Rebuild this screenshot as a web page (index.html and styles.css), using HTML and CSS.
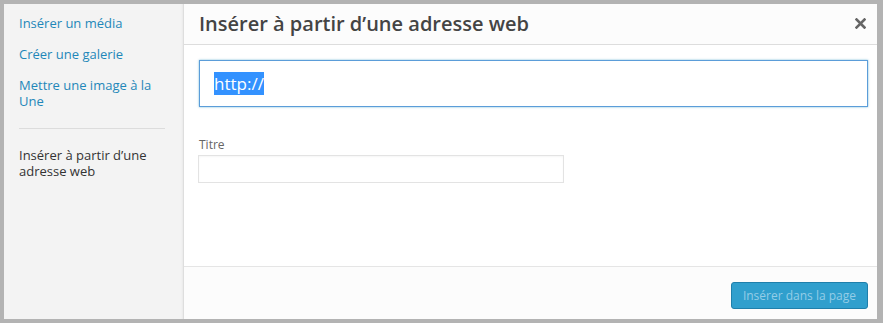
FILE: index.html
```html
<!DOCTYPE html>
<html lang="fr">
<head>
<meta charset="UTF-8">
<meta name="viewport" content="width=device-width, initial-scale=1.0">
<title>Insérer à partir d’une adresse web</title>
<link rel="stylesheet" href="styles.css">
</head>
<body>
<div class="modal">
  <div class="menu">
    <a class="menu-item" href="#">Insérer un média</a>
    <a class="menu-item" href="#">Créer une galerie</a>
    <a class="menu-item" href="#">Mettre une image à la Une</a>
    <div class="separator"></div>
    <div class="menu-item active">Insérer à partir d’une adresse web</div>
  </div>
  <div class="frame">
    <div class="frame-title">
      <h1>Insérer à partir d’une adresse web</h1>
      <span class="close">
        <svg width="11" height="11" viewBox="0 0 11 11">
          <path d="M1.5 1.5 L9.5 9.5 M9.5 1.5 L1.5 9.5" stroke="#666" stroke-width="2.6" stroke-linecap="square"/>
        </svg>
      </span>
    </div>
    <div class="frame-content">
      <div class="url-input"><span class="selected">http://</span></div>
      <label class="field-label">Titre</label>
      <div class="text-input"></div>
    </div>
    <div class="frame-toolbar">
      <button class="button-primary" disabled>Insérer dans la page</button>
    </div>
  </div>
</div>
</body>
</html>
```

FILE: styles.css
```css
body {
  margin: 0;
  padding: 4px 6px 4px 4px;
  background: #b3b3b3;
  font-family: "Open Sans", sans-serif;
}
.modal {
  display: flex;
  height: 315px;
  background: #fff;
}
.menu {
  width: 164px;
  padding: 11px 0 0 15px;
  background: #f3f3f3;
  border-right: 1px solid #dedede;
  box-shadow: inset -3px 0 3px -3px rgba(0, 0, 0, 0.08);
}
.menu-item {
  display: block;
  width: 145px;
  margin-bottom: 15px;
  font-size: 13px;
  line-height: 16px;
  color: #1f87b9;
  text-decoration: none;
}
.menu-item.active {
  color: #333;
}
.separator {
  width: 146px;
  height: 1px;
  margin: 19px 0 18px;
  background: #dcdcdc;
}
.frame {
  flex: 1;
  display: flex;
  flex-direction: column;
}
.frame-title {
  display: flex;
  align-items: center;
  justify-content: space-between;
  height: 40px;
  padding: 0 11px 0 15px;
  background: #fcfcfc;
  border-bottom: 1px solid #dddddd;
}
.frame-title h1 {
  margin: 0;
  font-size: 20px;
  font-weight: 600;
  color: #444;
  line-height: 40px;
}
.close {
  display: flex;
  margin-top: -2px;
}
.frame-content {
  flex: 1;
  padding: 15px 9px 0 15px;
}
.url-input {
  height: 45px;
  padding: 0 14px;
  border: 1px solid #5b9dd9;
  box-shadow: 0 0 2px rgba(30, 140, 190, 0.6);
  font-size: 17px;
  line-height: 45px;
  color: #333;
}
.selected {
  background: #3392ff;
  color: #fff;
}
.field-label {
  display: block;
  margin-top: 30px;
  font-size: 12px;
  line-height: 16px;
  color: #666;
}
.text-input {
  width: 364px;
  height: 26px;
  margin: 2px 0 0 -1px;
  border: 1px solid #e3e3e3;
  box-shadow: inset 0 1px 2px rgba(0, 0, 0, 0.04);
}
.frame-toolbar {
  display: flex;
  justify-content: flex-end;
  height: 37px;
  padding: 15px 9px 0 0;
  background: #fcfcfc;
  border-top: 1px solid #e5e5e5;
}
.button-primary {
  height: 27px;
  padding: 0 11px;
  border: 1px solid #1f7fab;
  border-radius: 3px;
  background: #309fcd;
  color: #94cde7;
  font-family: "Open Sans", sans-serif;
  font-size: 12px;
  white-space: nowrap;
}
```
